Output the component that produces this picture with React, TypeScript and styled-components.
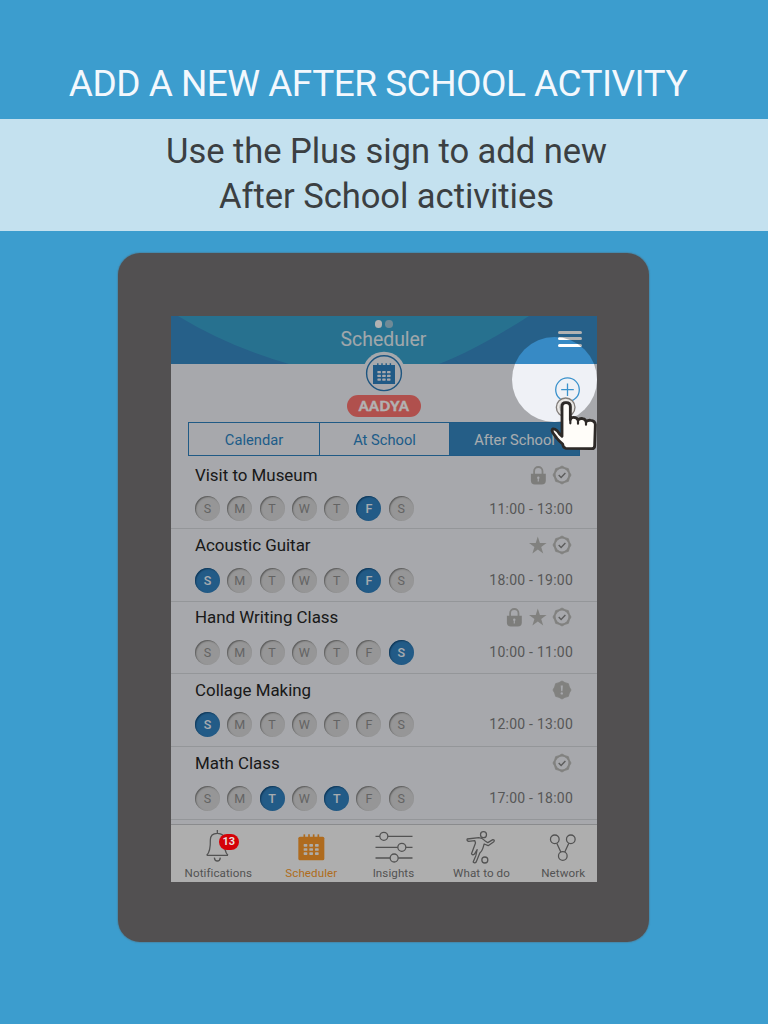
import React from 'react';
import styled, { createGlobalStyle } from 'styled-components';

const GlobalStyle = createGlobalStyle`
  *, *::before, *::after { box-sizing: border-box; }
  body { margin: 0; background: #3c9dce; font-family: Roboto, sans-serif; }
`;

const Page = styled.main`
  width: 768px;
  height: 1024px;
  overflow: hidden;
  background: #3c9dce;
  display: flex;
  flex-direction: column;
  align-items: center;
`;

const Headline = styled.h1`
  width: 100%;
  height: 119px;
  margin: 0;
  padding: 62px 12px 0 0;
  font-size: 37px;
  line-height: 44px;
  font-weight: 400;
  letter-spacing: -0.52px;
  text-align: center;
  white-space: nowrap;
  color: #f3f8fd;
`;

const Banner = styled.p`
  width: 100%;
  height: 112px;
  margin: 0;
  padding: 10px 0 0 5px;
  background: #c4e1ef;
  color: #3b3f42;
  font-size: 34.6px;
  line-height: 45px;
  letter-spacing: -0.06px;
  text-align: center;
`;

const Tablet = styled.section`
  width: 531px;
  height: 689px;
  margin: 22px 1px 0 0;
  padding: 63px 52px 60px 53px;
  border-radius: 22px;
  background: #525051;
  box-shadow: 0 0 1px 1px rgba(82, 110, 125, 0.4);
`;

const Screen = styled.div`
  position: relative;
  width: 426px;
  height: 566px;
  overflow: hidden;
  background: #eff1f6;
  display: flex;
  flex-direction: column;
`;

const AppHeader = styled.header`
  position: relative;
  height: 48px;
  flex: none;
  background: #378ac5;
  display: grid;
  grid-template-columns: 1fr auto 1fr;
`;

const HeaderArt = styled.svg`
  position: absolute;
  inset: 0;
`;

const TitleBlock = styled.div`
  position: relative;
  grid-column: 2;
  padding: 4px 1px 0 0;
  display: flex;
  flex-direction: column;
  align-items: center;
`;

const PageDots = styled.div`
  display: flex;
  gap: 3px;
  margin-left: 1px;
`;

const Dot = styled.i<{ $on?: boolean }>`
  width: 7.6px;
  height: 7.6px;
  border-radius: 50%;
  background: ${p => (p.$on ? '#ffffff' : '#9fc6d8')};
`;

const AppTitle = styled.h2`
  margin: 1px 0 0;
  font-size: 19.4px;
  line-height: 22px;
  font-weight: 400;
  color: #e6f0f5;
`;

const MenuButton = styled.div`
  position: relative;
  justify-self: end;
  margin: 15px 15.5px 0 0;
  width: 23.5px;
  display: flex;
  flex-direction: column;
  gap: 3.4px;
`;

const MenuBar = styled.i`
  height: 3px;
  border-radius: 2px;
  background: #fff;
`;

const Profile = styled.div`
  height: 58px;
  flex: none;
  display: grid;
  grid-template-columns: 1fr auto 1fr;
`;

const ProfileCenter = styled.div`
  grid-column: 2;
  display: flex;
  flex-direction: column;
  align-items: center;
`;

const Avatar = styled.svg`
  position: relative;
  margin-top: -13px;
  flex: none;
`;

const NamePill = styled.div`
  height: 21.5px;
  width: 74px;
  border-radius: 11px;
  background: #fc736f;
  color: #fff;
  font-family: Lato, sans-serif;
  font-size: 14px;
  font-weight: 900;
  line-height: 21px;
  letter-spacing: 0.6px;
  text-align: center;
  -webkit-text-stroke: 0.4px #fff;
`;

const AddButton = styled.svg`
  justify-self: end;
  margin: 13px 17px 0 0;
`;

const Segments = styled.nav`
  width: 392px;
  height: 34px;
  flex: none;
  margin-left: 17px;
  border: 1.5px solid #2f82bf;
  display: grid;
  grid-template-columns: 130px 130px 1fr;
`;

const Segment = styled.div<{ $active?: boolean }>`
  display: flex;
  align-items: center;
  justify-content: center;
  padding-top: 1px;
  font-size: 14.7px;
  color: ${p => (p.$active ? '#f2f7fb' : '#2c84c4')};
  background: ${p => (p.$active ? '#3587c2' : 'transparent')};
  & + & { border-left: 1.5px solid #2f82bf; }
`;

const Row = styled.article<{ $height: number; $top: number; $gap: number }>`
  height: ${p => p.$height}px;
  flex: none;
  padding: ${p => p.$top}px 24px 0;
  border-bottom: 1px solid #d5d7db;
  display: flex;
  flex-direction: column;
  gap: ${p => p.$gap}px;
`;

const RowLine = styled.div<{ $height: number }>`
  height: ${p => p.$height}px;
  display: flex;
  align-items: center;
  justify-content: space-between;
`;

const ActivityName = styled.h3`
  margin: 0;
  font-size: 16.9px;
  line-height: 22px;
  font-weight: 400;
  color: #262626;
`;

const Flags = styled.div`
  display: flex;
  gap: 4px;
  margin-right: 1px;
`;

const Days = styled.div`
  display: flex;
  gap: 7.3px;
`;

const Day = styled.span<{ $on: boolean }>`
  width: 25px;
  height: 25px;
  border-radius: 50%;
  display: flex;
  align-items: center;
  justify-content: center;
  font-size: 12.5px;
  font-weight: ${p => (p.$on ? 500 : 400)};
  color: ${p => (p.$on ? '#f0f6fb' : '#8f8f8f')};
  background: ${p => (p.$on ? '#3283c2' : '#d7d7d8')};
  box-shadow: inset 1px 1px 1.5px ${p => (p.$on ? '#144d7c' : '#808080')};
`;

const Time = styled.time`
  font-size: 14px;
  letter-spacing: 0.24px;
  color: #7d7d7d;
`;

const TabBar = styled.nav`
  margin-top: auto;
  height: 58px;
  flex: none;
  padding-top: 4px;
  border-top: 1px solid #c6c7ca;
  background: #fafafa;
  display: grid;
  grid-template-columns: 94.6px 91.4px 73px 103px 60.4px;
`;

const Tab = styled.div<{ $active?: boolean }>`
  display: flex;
  flex-direction: column;
  align-items: center;
  font-size: 11.6px;
  line-height: 17px;
  letter-spacing: 0.08px;
  white-space: nowrap;
  color: ${p => (p.$active ? '#fb9a2c' : '#777')};
`;

const TabIcon = styled.svg`
  width: 48px;
  height: 36px;
  flex: none;
  fill: none;
  stroke: #777;
  stroke-width: 3.8;
  stroke-linejoin: round;
`;

const Spotlight = styled.div`
  position: absolute;
  left: 341px;
  top: 20.5px;
  width: 85px;
  height: 85px;
  border-radius: 50%;
  box-shadow: 0 0 0 900px rgba(0, 0, 0, 0.3);
`;

const CountBadge = styled.span`
  position: absolute;
  left: 47.5px;
  top: 518px;
  width: 20.5px;
  height: 16px;
  border-radius: 8px;
  background: #d50208;
  color: #e8dede;
  font-size: 11px;
  line-height: 16px;
  font-weight: 700;
  text-align: center;
`;

const Pointer = styled.svg`
  position: absolute;
  left: 379px;
  top: 79px;
`;

const range = (n: number) => Array.from({ length: n }, (_, i) => i);

const badgePoints = range(16)
  .map(i => {
    const r = i % 2 ? 7.9 : 9;
    const a = (i * Math.PI) / 8;
    return `${(10 + r * Math.sin(a)).toFixed(2)},${(10 - r * Math.cos(a)).toFixed(2)}`;
  })
  .join(' ');

const Verified = () => (
  <svg width="20" height="20" viewBox="0 0 20 20">
    <polygon points={badgePoints} fill="#b9b9b7" stroke="#b9b9b7" strokeWidth="0.9" strokeLinejoin="round" />
    <circle cx="10" cy="10" r="6.4" fill="#eff1f6" />
    <path d="M6.7 10l2.4 2.4 4.3-4.3" fill="none" stroke="#858585" strokeWidth="1.4" />
  </svg>
);

const Alert = () => (
  <svg width="20" height="20" viewBox="0 0 20 20">
    <polygon points={badgePoints} fill="#b9b9b7" stroke="#b9b9b7" strokeWidth="0.9" strokeLinejoin="round" />
    <path d="M8.7 5.5h2.2l-.5 5.7h-1.2z" fill="#eff1f6" />
    <circle cx="9.8" cy="13.4" r="1.2" fill="#eff1f6" />
  </svg>
);

const Star = () => (
  <svg width="20" height="20" viewBox="0 0 20 20">
    <path d="M9.8 1.6l2.1 6.3 6.7.1-5.4 4 2 6.5-5.4-3.9-5.4 3.9 2-6.5L1 8l6.7-.1z" fill="#b9b9b7" />
  </svg>
);

const Lock = () => (
  <svg width="20" height="20" viewBox="0 0 20 20">
    <path d="M6.1 10V6.2a4.2 4.2 0 0 1 8.4 0V10" fill="none" stroke="#b9b9b7" strokeWidth="1.8" />
    <path d="M2.9 8.7h14.9v6.8q0 4-4 4H6.9q-4 0-4-4z" fill="#b3b3b1" />
    <circle cx="10.3" cy="12.7" r="1.2" fill="#eff1f6" />
    <path d="M9.8 13h1l.1 3.4H9.7z" fill="#eff1f6" />
  </svg>
);

const flagIcons = { lock: Lock, star: Star, verified: Verified, alert: Alert };
type Flag = keyof typeof flagIcons;

interface Activity {
  name: string;
  time: string;
  days: number[];
  flags: Flag[];
  height: number;
  top: number;
  gap: number;
}

const activities: Activity[] = [
  { name: 'Visit to Museum', time: '11:00 - 13:00', days: [5], flags: ['lock', 'verified'], height: 73, top: 8, gap: 10 },
  { name: 'Acoustic Guitar', time: '18:00 - 19:00', days: [0, 5], flags: ['star', 'verified'], height: 73, top: 5, gap: 11.5 },
  { name: 'Hand Writing Class', time: '10:00 - 11:00', days: [6], flags: ['lock', 'star', 'verified'], height: 72, top: 4.4, gap: 11.6 },
  { name: 'Collage Making', time: '12:00 - 13:00', days: [0], flags: ['alert'], height: 73, top: 5, gap: 10.5 },
  { name: 'Math Class', time: '17:00 - 18:00', days: [2, 4], flags: ['verified'], height: 73, top: 5, gap: 11.6 },
];

const ActivityRow = ({ item }: { item: Activity }) => (
  <Row $height={item.height} $top={item.top} $gap={item.gap}>
    <RowLine $height={22}>
      <ActivityName>{item.name}</ActivityName>
      <Flags>
        {item.flags.map(flag => {
          const Icon = flagIcons[flag];
          return <Icon key={flag} />;
        })}
      </Flags>
    </RowLine>
    <RowLine $height={25}>
      <Days>
        {'SMTWTFS'.split('').map((letter, i) => (
          <Day key={i} $on={item.days.includes(i)}>{letter}</Day>
        ))}
      </Days>
      <Time>{item.time}</Time>
    </RowLine>
  </Row>
);

const BellIcon = () => (
  <TabIcon viewBox="88 267 144 108">
    <path d="M158 270v9M126 346h64M126 346Q138 335 137 300Q137 280 158 280Q179 280 179 300Q178 335 190 346M149 353Q150 363 158 363Q166 363 167 353" />
  </TabIcon>
);

const CalendarIcon = () => (
  <TabIcon viewBox="367 267 144 108">
    <rect x="401" y="290" width="78" height="71" rx="5" fill="#fb9a2c" stroke="none" />
    {range(4).map(i => (
      <path key={i} d={`M${419 + i * 14} 283v10`} stroke="#fb9a2c" strokeWidth="5" />
    ))}
    {range(9).map(i => (
      <rect key={i} x={417 + (i % 3) * 17} y={312 + Math.floor(i / 3) * 12.5} width="11" height="8" rx="2" fill="#faf6f0" stroke="none" />
    ))}
  </TabIcon>
);

const SlidersIcon = () => (
  <TabIcon viewBox="-1.5 42 144 108">
    <path d="M18 64h13M55 64h74M18 97h67M109 97h20M18 129h44M86 129h43" />
    <circle cx="43" cy="64" r="12" />
    <circle cx="97" cy="97" r="12" />
    <circle cx="74" cy="129" r="12" />
  </TabIcon>
);

const PlayerIcon = () => (
  <TabIcon viewBox="262.5 42 144 108">
    <circle cx="342" cy="59" r="9" />
    <path d="M293 72L328 68Q338 69 346 77L355 83L370 74Q377 74 373 80L356 92L344 87L340 100Q337 109 331 114L320 141Q316 146 311 141L319 122L323 104L315 117Q309 122 306 116L318 84L316 77L297 79Q291 77 293 72Z" />
    <circle cx="346" cy="135" r="9" />
  </TabIcon>
);

const NetworkIcon = () => (
  <TabIcon viewBox="507.6 42 144 108">
    <circle cx="555" cy="73" r="13" />
    <circle cx="603" cy="73" r="13" />
    <circle cx="579" cy="123" r="13" />
    <path d="M561 85L573 111M597 85L585 111" />
  </TabIcon>
);

export default function App() {
  return (
    <Page>
      <GlobalStyle />
      <Headline>ADD A NEW AFTER SCHOOL ACTIVITY</Headline>
      <Banner>
        Use the Plus sign to add new
        <br />
        After School activities
      </Banner>
      <Tablet>
        <Screen>
          <AppHeader>
            <HeaderArt width="426" height="48" viewBox="0 0 426 48">
              <path d="M7 0Q58 31 118 48H268Q305 34 358 0Z" fill="#39a3cd" />
            </HeaderArt>
            <TitleBlock>
              <PageDots>
                <Dot $on />
                <Dot />
              </PageDots>
              <AppTitle>Scheduler</AppTitle>
            </TitleBlock>
            <MenuButton>
              <MenuBar />
              <MenuBar />
              <MenuBar />
            </MenuButton>
          </AppHeader>

          <Profile>
            <ProfileCenter>
              <Avatar width="44" height="44" viewBox="0 0 44 44">
                <circle cx="22" cy="22.2" r="21.5" fill="#eff1f6" />
                <circle cx="22" cy="22.2" r="17.4" fill="none" stroke="#2b7ab8" strokeWidth="1.4" />
                <path d="M11 14h22v19H11z" fill="#2f82c0" />
                {range(4).map(i => (
                  <path key={i} d={`M${15.8 + i * 4.2} 12.2v3`} stroke="#2f82c0" strokeWidth="1.4" />
                ))}
                {range(9).map(i => (
                  <rect key={i} x={15.4 + (i % 3) * 4.8} y={20 + Math.floor(i / 3) * 3.7} width="3.5" height="2.3" rx="0.6" fill="#eff1f6" />
                ))}
              </Avatar>
              <NamePill>AADYA</NamePill>
            </ProfileCenter>
            <AddButton width="25" height="25" viewBox="0 0 25 25" fill="none" stroke="#3b92cc" strokeWidth="1.3">
              <circle cx="12.5" cy="12.7" r="11.8" />
              <path d="M12.5 6.4v12.6M6.2 12.7h12.6" />
            </AddButton>
          </Profile>

          <Segments>
            <Segment>Calendar</Segment>
            <Segment>At School</Segment>
            <Segment $active>After School</Segment>
          </Segments>

          {activities.map(item => (
            <ActivityRow key={item.name} item={item} />
          ))}

          <TabBar>
            <Tab><BellIcon />Notifications</Tab>
            <Tab $active><CalendarIcon />Scheduler</Tab>
            <Tab><SlidersIcon />Insights</Tab>
            <Tab><PlayerIcon />What to do</Tab>
            <Tab><NetworkIcon />Network</Tab>
          </TabBar>

          <Spotlight />
          <CountBadge>13</CountBadge>
          <Pointer width="48" height="57" viewBox="150 210 144 171">
            <circle cx="197" cy="247" r="28" fill="#e9e7e4" stroke="#827d7a" strokeWidth="4" />
            <circle cx="197" cy="247" r="19" fill="#b9b5b2" />
            <path
              d="M186 328V245Q186 233 198 233Q211 233 211 245V284Q213 277 221 277Q231 277 234 285Q240 279 248 281Q257 283 258 290Q264 285 272 286Q285 287 286 299L284 362Q284 371 275 371L198 370Q189 369 188 357Q176 347 170 339Q156 322 156 316Q157 309 165 313Q173 317 178 326L186 334Z"
              fill="#fffdf9"
              stroke="#2d2927"
              strokeWidth="8.5"
              strokeLinejoin="round"
            />
            <path d="M211 282v13M234 285v11M258 290v9" stroke="#2d2927" strokeWidth="6.5" strokeLinecap="round" />
          </Pointer>
        </Screen>
      </Tablet>
    </Page>
  );
}
